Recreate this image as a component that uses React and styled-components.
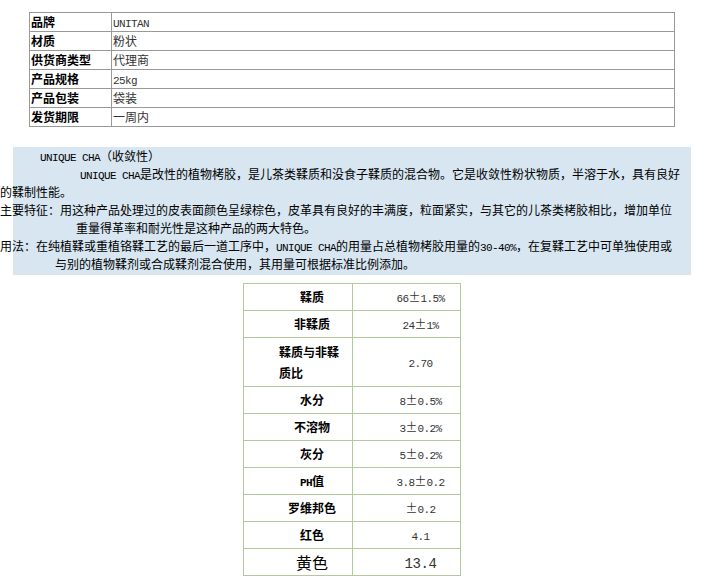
import React from "react";
import styled, { createGlobalStyle } from "styled-components";

const specs = [
  ["品牌", "UNITAN"],
  ["材质", "粉状"],
  ["供货商类型", "代理商"],
  ["产品规格", "25kg"],
  ["产品包装", "袋装"],
  ["发货期限", "一周内"],
];

// indent is measured from the left edge of the blue box (x = 13)
const introLines = [
  { indent: 27, text: "UNIQUE CHA（收敛性）" },
  {
    indent: 67,
    text: "UNIQUE CHA是改性的植物栲胶，是儿茶类鞣质和没食子鞣质的混合物。它是收敛性粉状物质，半溶于水，具有良好",
  },
  { indent: -13, text: "的鞣制性能。" },
  {
    indent: -13,
    text: "主要特征：用这种产品处理过的皮表面颜色呈绿棕色，皮革具有良好的丰满度，粒面紧实，与其它的儿茶类栲胶相比，增加单位",
  },
  { indent: 63, text: "重量得革率和耐光性是这种产品的两大特色。" },
  {
    indent: -13,
    text: "用法：在纯植鞣或重植铬鞣工艺的最后一道工序中，UNIQUE CHA的用量占总植物栲胶用量的30-40%，在复鞣工艺中可单独使用或",
  },
  { indent: 42, text: "与别的植物鞣剂或合成鞣剂混合使用，其用量可根据标准比例添加。" },
];

const analysis = [
  { label: "鞣质", value: "66±1.5%" },
  { label: "非鞣质", value: "24±1%" },
  { label: ["鞣质与非鞣", "质比"], value: "2.70", tall: true },
  { label: "水分", value: "8±0.5%" },
  { label: "不溶物", value: "3±0.2%" },
  { label: "灰分", value: "5±0.2%" },
  { label: "PH值", value: "3.8±0.2" },
  { label: "罗维邦色", value: "±0.2" },
  { label: "红色", value: "4.1" },
  { label: "黄色", value: "13.4", big: true },
];

function Mixed({ text, big }) {
  const parts = text.split(/([\x20-\x7e]+|±)/).filter(Boolean);
  return parts.map((p, i) => {
    if (p === "±") return <Wide key={i}>±</Wide>;
    if (/^[\x20-\x7e]+$/.test(p))
      return (
        <Latin key={i} $big={big}>
          {p}
        </Latin>
      );
    return <React.Fragment key={i}>{p}</React.Fragment>;
  });
}

export default function App() {
  return (
    <Page>
      <GlobalStyle />

      <SpecTable>
        <tbody>
          {specs.map(([label, value]) => (
            <SpecRow key={label}>
              <SpecLabel>{label}</SpecLabel>
              <SpecValue>
                <Mixed text={value} />
              </SpecValue>
            </SpecRow>
          ))}
        </tbody>
      </SpecTable>

      <Intro>
        {introLines.map((line, i) => (
          <IntroLine key={i} $indent={line.indent}>
            <Mixed text={line.text} />
          </IntroLine>
        ))}
      </Intro>

      <DataTable>
        <tbody>
          {analysis.map((row, i) => (
            <DataRow key={i} $tall={row.tall}>
              <DataLabel $big={row.big} $wrapped={Array.isArray(row.label)}>
                {Array.isArray(row.label) ? (
                  row.label.map((l) => <LabelLine key={l}>{l}</LabelLine>)
                ) : (
                  <Mixed text={row.label} big={row.big} />
                )}
              </DataLabel>
              <DataValue $big={row.big}>
                <Mixed text={row.value} big={row.big} />
              </DataValue>
            </DataRow>
          ))}
        </tbody>
      </DataTable>
    </Page>
  );
}

const GlobalStyle = createGlobalStyle`
  body {
    margin: 0;
    background: #fff;
    color: #000;
    font-family: "Noto Sans CJK SC", "Noto Sans", sans-serif;
    font-size: 12px;
  }
`;

const Page = styled.div`
  padding-top: 12px;
  display: flex;
  flex-direction: column;
  align-items: flex-start;
`;

const Latin = styled.span`
  font-family: "Liberation Mono", monospace;
  font-size: ${(p) => (p.$big ? "14px" : "11px")};
  letter-spacing: ${(p) => (p.$big ? "-0.4px" : "-0.6px")};
  line-height: 1;
`;

const Wide = styled.span`
  display: inline-block;
  width: 12px;
  line-height: 1;
  text-align: center;
  font-family: "Noto Sans CJK SC", sans-serif;
`;

const SpecTable = styled.table`
  margin-left: 29px;
  width: 646px;
  border-collapse: collapse;
  border: 1px solid #999;
  table-layout: fixed;
`;

const SpecRow = styled.tr`
  height: 19px;
`;

const SpecCell = styled.td`
  height: 18px;
  padding: 0 1px;
  border: 1px solid #999;
  line-height: 16px;
  vertical-align: middle;
  white-space: nowrap;
  overflow: hidden;
`;

const SpecLabel = styled(SpecCell)`
  width: 79px;
  font-weight: bold;
  color: #000;
`;

const SpecValue = styled(SpecCell)`
  color: #333;
`;

const Intro = styled.div`
  margin-top: 20px;
  margin-left: 13px;
  width: 678px;
  padding-bottom: 2px;
  background: #d7e6f1;
  color: #000;
`;

const IntroLine = styled.div`
  height: 18px;
  line-height: 18px;
  margin-left: ${(p) => p.$indent}px;
  white-space: nowrap;
`;

const DataTable = styled.table`
  margin-top: 8px;
  margin-left: 243px;
  width: 218px;
  border-collapse: collapse;
  border: 1px solid #b3c99b;
  table-layout: fixed;
`;

const DataRow = styled.tr`
  height: ${(p) => (p.$tall ? 49 : 27)}px;
`;

const DataCell = styled.td`
  border: 1px solid #b3c99b;
  vertical-align: middle;
  white-space: nowrap;
  padding: 0 0 0 28px;
  line-height: 16px;
`;

const DataLabel = styled(DataCell)`
  width: 80px;
  text-align: ${(p) => (p.$wrapped ? "left" : "center")};
  padding-left: ${(p) => (p.$wrapped ? "35px" : "28px")};
  font-weight: ${(p) => (p.$big ? "normal" : "bold")};
  font-size: ${(p) => (p.$big ? "16px" : "12px")};
  line-height: ${(p) => (p.$wrapped ? "21px" : "16px")};
`;

const LabelLine = styled.div``;

const DataValue = styled(DataCell)`
  text-align: center;
  color: #333;
  font-size: ${(p) => (p.$big ? "16px" : "12px")};
`;
